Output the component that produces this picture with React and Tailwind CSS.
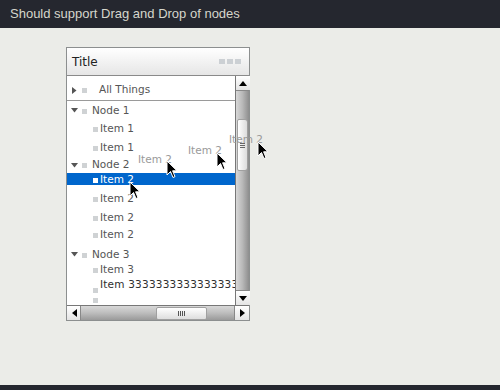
import React from "react";

const font = { fontFamily: '"DejaVu Sans", Verdana, sans-serif' };

function Cursor({ className }) {
  return (
    <svg className={className} width="12" height="19" viewBox="0 0 12 19">
      <path d="M1 1 L1 15 L4.5 11.5 L7 17.5 L9 16.6 L6.6 10.8 L11 10.8 Z" fill="#000" stroke="#fff" strokeWidth="1" strokeLinejoin="round" />
    </svg>
  );
}

function Down() {
  return (
    <svg width="7" height="5" viewBox="0 0 7 5"><path d="M0 0 L7 0 L3.5 4.5 Z" fill="#555" /></svg>
  );
}

function Right() {
  return (
    <svg width="5" height="7" viewBox="0 0 5 7"><path d="M0 0 L4.5 3.5 L0 7 Z" fill="#555" /></svg>
  );
}

function Sq({ white }) {
  return <span className={`inline-block w-[5px] h-[5px] ${white ? "bg-white" : "bg-[#cfd2d4]"}`} />;
}

// rows of the tree, heights tuned to the reference
const rows = [
  { kind: "node", label: "Node 1", h: "h-[17px]" },
  { kind: "item", label: "Item 1", h: "h-[20px]" },
  { kind: "item", label: "Item 1", h: "h-[17px]" },
  { kind: "node", label: "Node 2", h: "h-[18px]" },
  { kind: "item", label: "Item 2", h: "h-[12px]", sel: true },
  { kind: "item", label: "Item 2", h: "h-[26px]" },
  { kind: "item", label: "Item 2", h: "h-[12px]" },
  { kind: "item", label: "Item 2", h: "h-[22px]" },
  { kind: "node", label: "Node 3", h: "h-[17px]" },
  { kind: "item", label: "Item 3", h: "h-[13px]" },
  { kind: "item", label: "Item 3333333333333333", h: "h-[18px]", dark: true },
  { kind: "item", label: "", h: "h-[12px]" },
];

function Row({ r }) {
  if (r.kind === "node") {
    return (
      <div className={`${r.h} flex items-center pl-[4px] pt-[2px] text-[#555] shrink-0`}>
        <Down />
        <span className="ml-[4px]"><Sq /></span>
        <span className="ml-[5px]">{r.label}</span>
      </div>
    );
  }
  return (
    <div className={`${r.h} flex items-center pl-[26px] pt-[2px] shrink-0 whitespace-nowrap ${r.sel ? "bg-[#0066cc] text-white" : "text-[#555]"}`}>
      <span className={r.dark ? "self-start mt-[5px]" : ""}><Sq white={r.sel} /></span>
      <span className={`ml-[2px] ${r.dark ? "text-[#2e2e2e] tracking-[0.2px]" : ""}`}>{r.label}</span>
    </div>
  );
}

function ArrowBtn({ dir }) {
  const paths = {
    up: "M0 5 L4 0 L8 5 Z",
    down: "M0 0 L8 0 L4 5 Z",
    left: "M5 0 L5 8 L0 4 Z",
    right: "M0 0 L5 4 L0 8 Z",
  };
  const wide = dir === "up" || dir === "down";
  return (
    <div className="w-[14px] h-[14px] bg-gradient-to-b from-white to-[#e4e4e4] flex items-center justify-center shrink-0">
      <svg width={wide ? 8 : 5} height={wide ? 5 : 8} viewBox={wide ? "0 0 8 5" : "0 0 5 8"}>
        <path d={paths[dir]} fill="#000" />
      </svg>
    </div>
  );
}

export default function App() {
  return (
    <div className="relative w-[500px] h-[390px] flex flex-col bg-[#ebece8] overflow-hidden" style={font}>
      <div
        className="h-[28px] bg-[#25272f] text-[#d6d6cc] text-[13px] pl-[10px] flex items-center shrink-0"
        style={{ fontFamily: '"Liberation Sans", Arial, sans-serif' }}
      >
        Should support Drag and Drop of nodes
      </div>

      <div className="flex-1 pt-[19px] pl-[66px]">
        <div className="w-[184px] h-[274px] border border-[#8c8f8f] flex flex-col bg-white">
          {/* title */}
          <div className="h-[28px] border-b border-[#8a8a8a] bg-gradient-to-b from-white to-[#e6e6e6] flex items-center justify-between pl-[5px] pr-[8px] shrink-0">
            <span className="text-[12px] text-[#222]">Title</span>
            <div className="flex gap-[2px]">
              <span className="w-[6px] h-[5px] bg-[#ccd0d4]" />
              <span className="w-[6px] h-[5px] bg-[#ccd0d4]" />
              <span className="w-[6px] h-[5px] bg-[#ccd0d4]" />
            </div>
          </div>

          {/* body */}
          <div className="flex-1 flex min-h-0">
            <div className="flex-1 flex flex-col overflow-hidden text-[10.5px]">
              <div className="h-[25px] border-b border-[#9a9a9a] flex items-center pl-[5px] pt-[4px] text-[#555] shrink-0">
                <Right />
                <span className="ml-[5px]"><Sq /></span>
                <span className="ml-[12px]">All Things</span>
              </div>
              {rows.map((r, i) => (
                <Row key={i} r={r} />
              ))}
            </div>
            <div className="w-[14px] flex flex-col border-l border-[#777]">
              <ArrowBtn dir="up" />
              <div className="flex-1 bg-gradient-to-r from-[#d8d8d8] via-[#b8b8b8] to-[#8e8e8e] border-t border-[#888] pt-[28px] flex flex-col items-center">
                <div className="w-[11px] h-[52px] rounded-r-[3px] rounded-l-[2px] bg-gradient-to-r from-white to-[#dcdcdc] border border-[#a0a0a0] flex flex-col items-center justify-center gap-[1px]">
                  <span className="w-[5px] h-px bg-[#666]" />
                  <span className="w-[5px] h-px bg-[#666]" />
                  <span className="w-[5px] h-px bg-[#666]" />
                </div>
              </div>
              <div className="border-t border-[#888]">
                <ArrowBtn dir="down" />
              </div>
            </div>
          </div>

          {/* horizontal scrollbar */}
          <div className="h-[15px] border-t border-[#777] flex shrink-0">
            <div className="w-[13px]">
              <ArrowBtn dir="left" />
            </div>
            <div className="flex-1 bg-gradient-to-b from-[#d8d8d8] via-[#bdbdbd] to-[#9a9a9a] border-l border-[#888] pl-[75px] flex items-center">
              <div className="w-[51px] h-[13px] rounded-[2px] bg-gradient-to-b from-white to-[#dedede] border border-[#a0a0a0] flex items-center justify-center gap-[1px]">
                <span className="w-px h-[5px] bg-[#555]" />
                <span className="w-px h-[5px] bg-[#555]" />
                <span className="w-px h-[5px] bg-[#555]" />
                <span className="w-px h-[5px] bg-[#555]" />
              </div>
            </div>
            <div className="border-l border-[#888]">
              <ArrowBtn dir="right" />
            </div>
          </div>
        </div>
      </div>

      <div className="h-[5px] bg-[#25272f] shrink-0" />

      {/* drag ghosts and cursors */}
      <span className="absolute left-[138px] top-[152px] text-[10.5px] text-[#9a9a9a]">Item 2</span>
      <span className="absolute left-[188px] top-[143px] text-[10.5px] text-[#9a9a9a]">Item 2</span>
      <span className="absolute left-[229px] top-[132px] text-[10.5px] text-[#9a9a9a]">Item 2</span>
      <Cursor className="absolute left-[129px] top-[181px]" />
      <Cursor className="absolute left-[166px] top-[160px]" />
      <Cursor className="absolute left-[216px] top-[152px]" />
      <Cursor className="absolute left-[257px] top-[141px]" />
    </div>
  );
}
